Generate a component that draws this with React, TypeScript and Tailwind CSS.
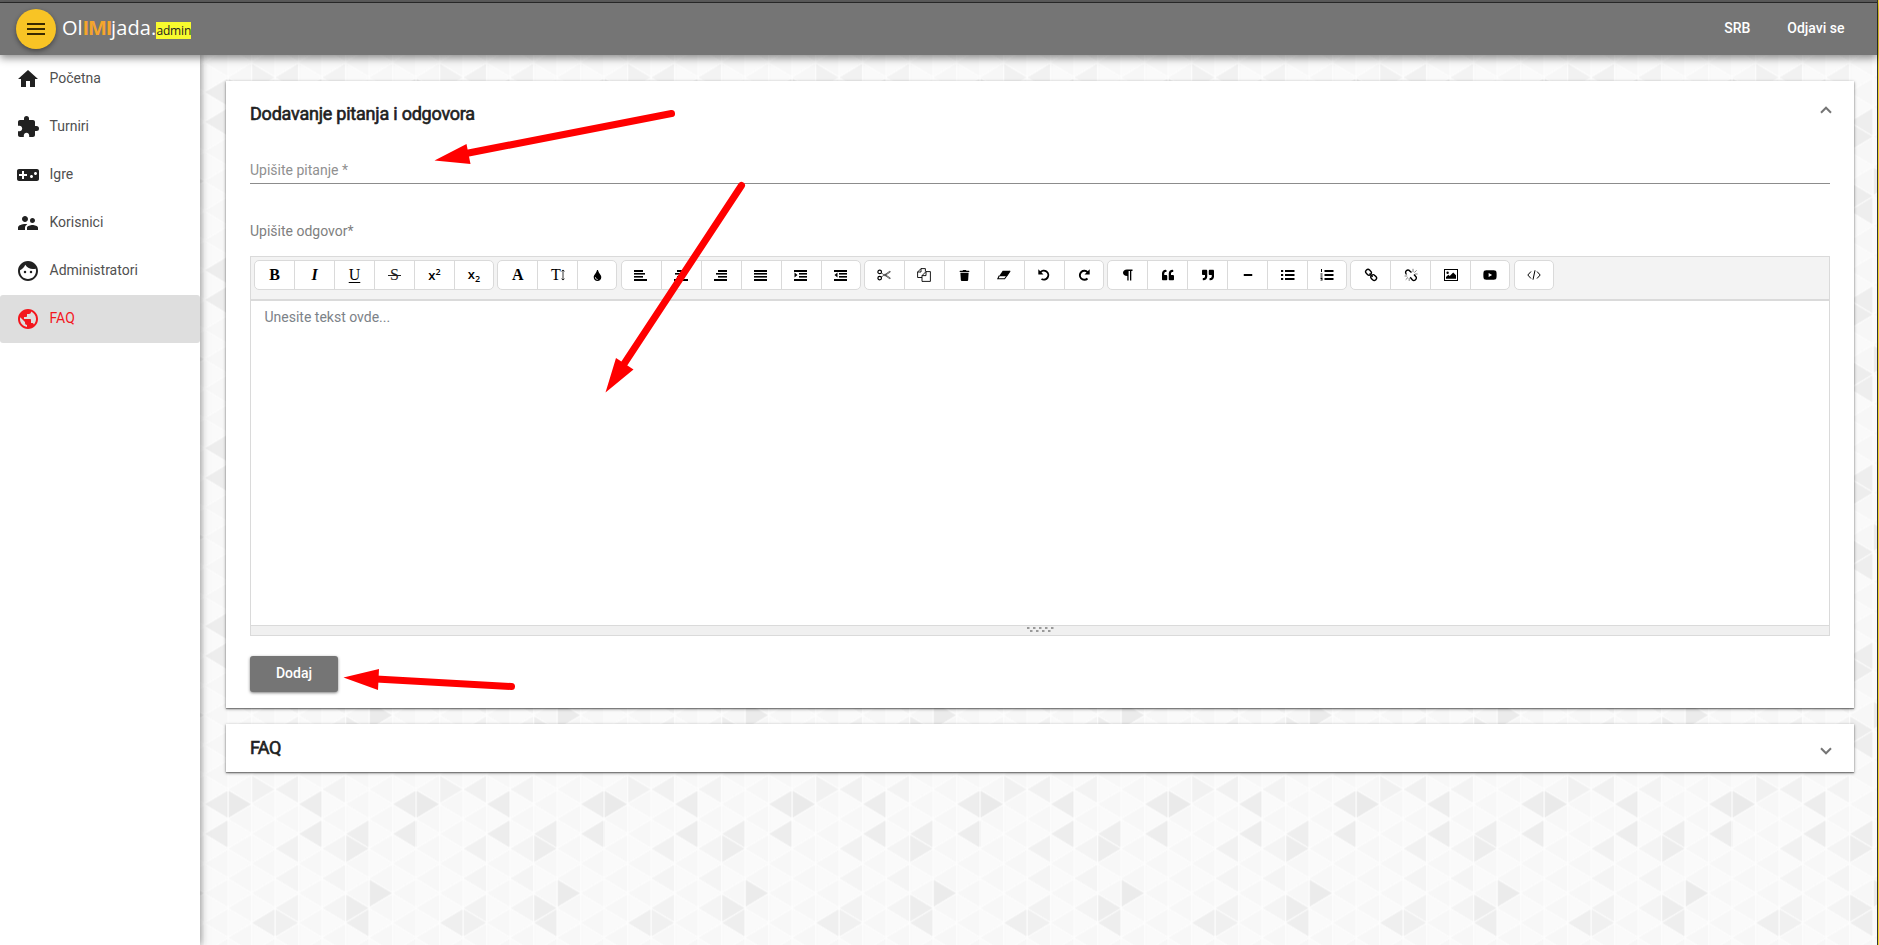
import type { ReactNode } from "react";
import { FaTint, FaTrash, FaParagraph, FaQuoteLeft, FaQuoteRight, FaMinus, FaYoutube } from "react-icons/fa";
import { MdHome, MdExtension, MdVideogameAsset, MdSupervisorAccount, MdFace, MdPublic, MdMenu } from "react-icons/md";

const STEP_X = 23.5;
const STEP_Y = 178 / 12;

const shades: Record<string, string> = {
  "7L1": "#ededed", "7L3": "#ededed", "0R1": "#eaeaea", "1R0": "#f1f1f1", "2L0": "#f1f1f1", "2L4": "#f1f1f1",
  "2L8": "#f2f2f2", "2R9": "#f0f0f0", "1L9": "#efefef", "3L1": "#ededed", "3L3": "#ededed", "4L0": "#f3f3f3",
  "4L4": "#f4f4f4", "5L3": "#eeeeee", "5R4": "#ededed", "5R8": "#ededed", "5L9": "#eeeeee", "6R7": "#ebebeb",
  "2L6": "#f4f4f4", "4L6": "#f4f4f4", "4L8": "#f4f4f4",
};

function TriangleBackdrop() {
  const shapes: ReactNode[] = [];
  for (let c = 0; c < 8; c++) {
    for (let k = 0; k <= 12; k++) {
      const right = (c + k) % 2 === 1;
      // The base of a triangle lies on the left grid line when it points right.
      const key = `${c}${right ? "R" : "L"}${k % 12}`;
      const x0 = c * STEP_X + 1.1;
      const x1 = (c + 1) * STEP_X - 0.9;
      const y = k * STEP_Y;
      const h = STEP_Y - 1.9;
      const pts = right
        ? `${x0},${y - h} ${x1},${y} ${x0},${y + h}`
        : `${x1},${y - h} ${x0},${y} ${x1},${y + h}`;
      const fill = shades[key] ?? (right ? "#fafafa" : "#f7f7f7");
      shapes.push(<polygon key={`${c}-${k}`} points={pts} fill={fill} stroke={fill} strokeWidth="0.6" strokeLinejoin="round" />);
    }
  }
  return (
    <svg className="absolute inset-0 h-full w-full" aria-hidden="true">
      <defs>
        <pattern id="triangles" width="188" height="178" x="28" y="22.4" patternUnits="userSpaceOnUse">
          <rect width="188" height="178" fill="#fdfdfd" />
          {shapes}
        </pattern>
      </defs>
      <rect width="100%" height="100%" fill="url(#triangles)" />
    </svg>
  );
}

function Line({ children }: { children: ReactNode }) {
  return (
    <svg width="14" height="14" viewBox="0 0 14 14" fill="none" stroke="currentColor" strokeWidth="1">
      {children}
    </svg>
  );
}

// Text bars, each given as [x, width].
function Bars({ rows = [], children }: { rows?: [number, number][]; children?: ReactNode }) {
  return (
    <svg width="14" height="12" viewBox="0 0 14 12" fill="currentColor">
      {rows.map(([x, w], i) => (
        <rect key={i} x={x} y={1 + i * 3} width={w} height={i === 0 || i === 3 ? 2 : 1.6} />
      ))}
      {children}
    </svg>
  );
}

const cut = (
  <Line>
    <circle cx="2.7" cy="3.9" r="1.8" strokeWidth="1.2" />
    <circle cx="2.7" cy="10.1" r="1.8" strokeWidth="1.2" />
    <path d="M4.4 5 12.8 10.8 13.4 10 7.6 6.3M4.4 9 12.8 3.2 13.4 4 7.6 7.7" strokeWidth=".6" />
  </Line>
);
const copy = (
  <Line>
    <path d="M5 9.5H.6V4L4 .6h4.4v3M4 .6V4H.6M9 3.6h4.4v9.8H5V7.6L9 3.6V7.6H5" strokeWidth=".9" />
  </Line>
);
const link = (
  <Line>
    <rect x="1.5" y="2" width="6" height="4.6" rx="2.2" transform="rotate(45 4.5 4.3)" strokeWidth="1.4" />
    <rect x="6.7" y="7.3" width="6" height="4.6" rx="2.2" transform="rotate(45 9.7 9.6)" strokeWidth="1.4" />
    <path d="m5.5 5.5 3.2 3.2" strokeWidth="1.3" />
  </Line>
);
const unlink = (
  <Line>
    <path d="M2.5 6.5 1.8 5.3C1 3.5 3 1.5 4.8 2.2L7.5 4.5M6.2 9.3 8.5 12c1.6 1.6 4.5-.8 3.7-2.9L10 6.5" strokeWidth="1.4" />
    <path d="M9 4V.8M10.3 4.600l2.300-2.300M11 6h2.600M3.300 8H.6M4 9.400l-2.300 2.300M5.200 10v3" strokeWidth=".5" />
  </Line>
);
const code = (
  <Line>
    <path d="M4 3.500.8 7 4 10.500M10 3.500 13.200 7 10 10.500M8 2.300 6 11.700" />
  </Line>
);
const picture = (
  <Line>
    <rect x=".5" y="1.500" width="13" height="11" />
    <circle cx="3.600" cy="4.800" r="1.200" fill="currentColor" stroke="none" />
    <path d="M2 10.800V9l2.300-2.200L5.700 8l3.500-3.600L12 7.300v3.500z" fill="currentColor" stroke="none" />
  </Line>
);
const eraser = (
  <Line>
    <path d="M5.700 2.700h7.600L9.600 8.300H2z" fill="currentColor" stroke="none" />
    <path d="M2.200 7.800.8 10.800h6.800L9.600 8M9.800 8l3.300-5" strokeWidth="1.100" />
  </Line>
);
const undo = (
  <Line>
    <path d="M3.300 4.300A4.500 4.500 0 1 1 4.500 11" strokeWidth="1.900" />
    <path d="M1.300 1.300V6.500H6.500z" fill="currentColor" stroke="none" />
  </Line>
);
const redo = (
  <Line>
    <path d="M10.700 4.300A4.500 4.500 0 1 0 10.500 10.500" strokeWidth="1.900" />
    <path d="M12.700 1.300V6.500H7.500z" fill="currentColor" stroke="none" />
  </Line>
);
const textSize = (
  <span className="flex items-center font-['Liberation_Serif',serif] text-[16px] leading-none">
    T
    <svg width="4" height="12" viewBox="0 0 4 12" fill="none" stroke="currentColor" strokeWidth=".8">
      <path d="M2 1v10M.5 2.300 2 1 3.500 2.300M.5 9.700 2 11 3.500 9.700" />
    </svg>
  </span>
);
const bigSerif = "font-['Liberation_Serif',serif] text-[16px] leading-none";
const script = "flex font-['Open_Sans',sans-serif] text-[13px] leading-none font-semibold";

const groups: ReactNode[][] = [
  [
    <span className={`${bigSerif} font-bold`}>B</span>,
    <span className={`${bigSerif} font-bold italic`}>I</span>,
    <span className={`${bigSerif} underline underline-offset-2`}>U</span>,
    <span className="relative px-[2px] font-['Liberation_Serif',serif] text-[16px] leading-none text-[#222]">
      S
      <span className="absolute inset-x-0 top-1/2 h-px bg-[#222]" />
    </span>,
    <span className={script}>x<span className="-mt-[2px] text-[9px]">2</span></span>,
    <span className={script}>x<span className="mt-[6px] text-[9px]">2</span></span>,
  ],
  [<span className={`${bigSerif} font-bold`}>A</span>, textSize, <FaTint size={11} />],
  [
    <Bars rows={[[0, 9], [0, 11], [0, 9], [0, 13]]} />,
    <Bars rows={[[3, 8], [1, 12], [3, 8], [0, 14]]} />,
    <Bars rows={[[4, 9], [2, 11], [4, 9], [0, 13]]} />,
    <Bars rows={[[0, 13], [0, 13], [0, 13], [0, 13]]} />,
    <Bars rows={[[0, 13], [5, 8], [5, 8], [0, 13]]}><path d="M.5 3.500v5L3.500 6z" /></Bars>,
    <Bars rows={[[0, 13], [5, 8], [5, 8], [0, 13]]}><path d="M3.500 3.500v5L.5 6z" /></Bars>,
  ],
  [cut, copy, <FaTrash size={11} />, eraser, undo, redo],
  [
    <svg width="11" height="12" viewBox="0 0 11 12" fill="currentColor">
      <path d="M5 .5h5.500V2H9.300v9.500H8V2H6.600v9.500H5.300V7C2.500 7 1 5.800 1 3.800S2.600.5 5 .5z" />
    </svg>,
    <FaQuoteLeft size={12} />,
    <FaQuoteRight size={12} />,
    <FaMinus size={10} />,
    <Bars>
      <path d="M0 1h2.200v2H0zM4 1h9.500v2H4zM0 5h2.200v2H0zM4 5h9.500v2H4zM0 9h2.200v2H0zM4 9h9.500v2H4z" />
    </Bars>,
    <Bars>
      <path d="M4.500 1h9v2h-9zM4.500 5h9v2h-9zM4.500 9h9v2h-9zM1 0h1v3H1zM.5 4.500h2v1h-1v1h1v1h-2v-1h1v-1h-1zM.5 8.500h2v3h-2v-.8h1v-.6h-1z" />
    </Bars>,
  ],
  [link, unlink, picture, <FaYoutube size={14} />],
  [code],
];

const nav = [
  { label: "Početna", icon: MdHome, active: false },
  { label: "Turniri", icon: MdExtension, active: false },
  { label: "Igre", icon: MdVideogameAsset, active: false },
  { label: "Korisnici", icon: MdSupervisorAccount, active: false },
  { label: "Administratori", icon: MdFace, active: false },
  { label: "FAQ", icon: MdPublic, active: true },
];

function Chevron({ up }: { up?: boolean }) {
  return (
    <svg width="12" height="8" viewBox="0 0 12 8" fill="none" stroke="#757575" strokeWidth="2">
      <path d={up ? "M1 6.700 6 1.700 11 6.700" : "M1 1.300 6 6.300 11 1.300"} />
    </svg>
  );
}

function Arrows() {
  return (
    <svg className="pointer-events-none absolute inset-0 z-30 h-full w-full" fill="#ff0000" stroke="#ff0000" aria-hidden="true">
      <path d="M671.500 113.500 466 153.500M741.500 185.500 622 367M511.500 686.500 376 679" strokeWidth="7" strokeLinecap="round" fill="none" />
      <path d="M434.500 160.500 466.500 144 470.500 164zM605.500 392.500 616 358 633.500 369.500zM343.500 677.500 379 669 378 690z" stroke="none" />
    </svg>
  );
}

export default function App() {
  return (
    <div className="relative flex h-[945px] w-[1879px] overflow-hidden bg-white font-[Roboto,'Liberation_Sans',sans-serif] text-sm text-[#212121]">
      <div className="flex w-[1877px] shrink-0 flex-col">
        <div className="relative z-20 h-[3px] shrink-0 border-b border-[#2b2b2b] bg-[#5d5d5d]" />
        <header className="relative z-20 flex h-[52px] shrink-0 items-center bg-[#757575] pl-4 text-white shadow-[0_3px_8px_rgba(0,0,0,0.45)]">
          <button className="mb-[1px] flex size-10 items-center justify-center rounded-full bg-[#f8c425] text-[#3a2a00] shadow-[0_2px_5px_rgba(0,0,0,0.4)]">
            <MdMenu size={24} />
          </button>
          <div className="mb-[2px] ml-1.5 flex items-baseline font-['Open_Sans',sans-serif] text-[20px] leading-6">
            <span>Ol</span>
            <span className="font-bold tracking-[-1.2px] text-[#f5a52c]">IMI</span>
            <span className="tracking-[0.1px]">jada.</span>
            <span className="bg-[#f8fb2e] text-[12px] leading-[17px] tracking-[-0.15px] text-[#222]">admin</span>
          </div>
          <nav className="mb-[2px] ml-auto flex gap-[37px] pr-[32.5px] font-medium">
            <a>SRB</a>
            <a>Odjavi se</a>
          </nav>
        </header>
        <div className="flex min-h-0 grow">
          <aside className="relative z-10 w-[200px] shrink-0 bg-white shadow-[0_0_8px_rgba(0,0,0,0.5)]">
            {nav.map(({ label, icon: Icon, active }) => (
              <a
                key={label}
                className={`flex h-12 items-center gap-[9.500px] rounded-[3px] pl-4 ${active ? "bg-[#dedede] text-[#f3161d]" : ""}`}
              >
                <Icon size={24} />
                <span className={`mb-[2px] ${active ? "" : "text-[#505050]"}`}>{label}</span>
              </a>
            ))}
          </aside>
          <main className="relative grow overflow-hidden bg-[#fafafa]">
            <TriangleBackdrop />
            <div className="relative flex flex-col gap-4 pt-[26px] pr-[23px] pl-[26px]">
              <section className="flex h-[627px] flex-col bg-white px-6 shadow-[0_1px_3px_rgba(0,0,0,0.45),0_1px_1px_rgba(0,0,0,0.3)]">
                <div className="flex items-start justify-between pt-[21px]">
                  <h2 className="text-[18px] leading-6 font-normal tracking-[-0.22px] [-webkit-text-stroke:0.6px_#212121]">Dodavanje pitanja i odgovora</h2>
                  <div className="mr-[-2px] pt-1"><Chevron up /></div>
                </div>
                <div className="mt-[34px] h-[24px] border-b border-[#8c8c8c] leading-5 text-[#909090]">Upišite pitanje *</div>
                <div className="mt-[37px] leading-5 text-[#808080]">Upišite odgovor*</div>
                <div className="mt-[15px] flex h-[380px] flex-col border border-[#dadada]">
                  <div className="flex h-[44px] shrink-0 items-start gap-[3.3px] border-b-2 border-[#dadada] bg-[#f3f3f3] pt-[3px] pl-[3px]">
                    {groups.map((g, i) => (
                      <div key={i} className="flex h-[30px] divide-x divide-[#dadada] overflow-hidden rounded-[5px] border border-[#dadada] bg-white text-black">
                        {g.map((icon, j) => (
                          <button key={j} className="flex w-[40px] items-center justify-center text-[13px] last:w-[38px]">
                            {icon}
                          </button>
                        ))}
                      </div>
                    ))}
                  </div>
                  <div className="grow px-[13.5px] pt-[6px] leading-5 text-[#7c8288]">Unesite tekst ovde...</div>
                  <div className="flex h-[10px] shrink-0 justify-center border-t border-[#dadada] bg-[#f0f0f0]">
                    <svg width="29" height="7" viewBox="0 0 29 7" fill="#999">
                      {[0, 1, 2, 3, 4].map((n) => <rect key={n} x={1 + n * 6} y="1" width="2.5" height="2" />)}
                      {[0, 1, 2, 3].map((n) => <rect key={n} x={4 + n * 6} y="4" width="2.5" height="2" />)}
                    </svg>
                  </div>
                </div>
                <button className="mt-5 h-9 w-[88px] shrink-0 rounded-[3px] bg-[#757575] pb-[2px] font-medium text-white shadow-[0_1px_3px_rgba(0,0,0,0.5)]">Dodaj</button>
              </section>
              <section className="flex h-12 items-center justify-between bg-white px-6 shadow-[0_1px_3px_rgba(0,0,0,0.45),0_1px_1px_rgba(0,0,0,0.3)]">
                <h2 className="text-[18px] leading-6 font-normal tracking-[-0.6px] [-webkit-text-stroke:0.6px_#212121]">FAQ</h2>
                <div className="mt-[6px] mr-[-2px]"><Chevron /></div>
              </section>
            </div>
          </main>
        </div>
      </div>
      <div className="w-[2px] shrink-0 border-l border-[#333] bg-[#f3d62c]" />
      <Arrows />
    </div>
  );
}
